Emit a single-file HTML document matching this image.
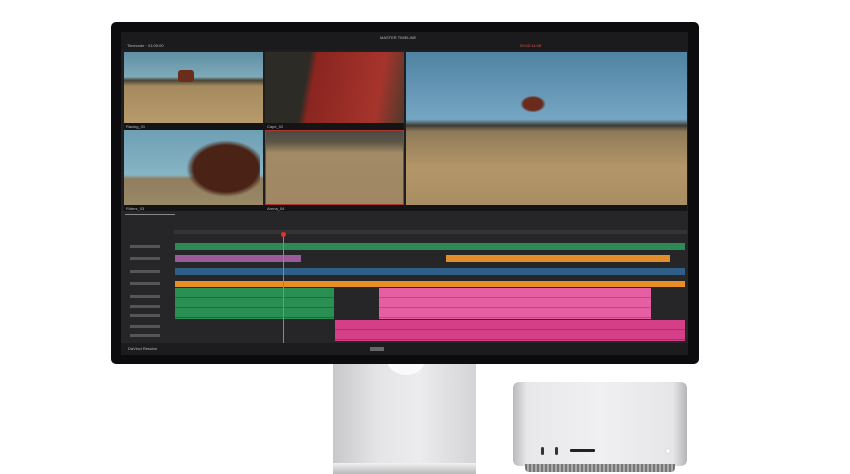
<!DOCTYPE html><html><head><style>
body{margin:0;width:850px;height:474px;background:#fff;position:relative;overflow:hidden;font-family:"Liberation Sans",sans-serif}
div{position:absolute;box-sizing:border-box}
.t{font-size:4px;color:#bbb;white-space:nowrap}
.h{width:30px;height:3px;background:#555;left:130px}
</style></head><body>
<!-- stand -->
<div style="left:333px;top:360px;width:143px;height:114px;background:linear-gradient(90deg,#c8c8ca,#e4e4e6 30%,#ececee 60%,#d4d4d6);"></div>
<div style="left:333px;top:463px;width:143px;height:11px;background:linear-gradient(#f2f2f2,#b8b8ba)"></div>
<div style="left:387px;top:345px;width:38px;height:30px;border-radius:50%;background:#fafafa"></div>
<!-- mac studio -->
<div style="left:513px;top:382px;width:174px;height:84px;border-radius:6px;background:linear-gradient(90deg,#b9b9bc,#e8e8ea 8%,#f0f0f2 50%,#e6e6e8 92%,#b5b5b8)"></div>
<div style="left:525px;top:464px;width:150px;height:8px;background:repeating-linear-gradient(90deg,#777 0 2px,#aaa 2px 4px);border-radius:0 0 4px 4px"></div>
<div style="left:541px;top:447px;width:3px;height:8px;background:#333;border-radius:2px"></div>
<div style="left:555px;top:447px;width:3px;height:8px;background:#333;border-radius:2px"></div>
<div style="left:570px;top:449px;width:25px;height:3px;background:#222;border-radius:1px"></div>
<div style="left:666px;top:449px;width:4px;height:4px;background:#fff;border-radius:50%;box-shadow:0 0 1px #999"></div>
<!-- monitor -->
<div style="left:111px;top:22px;width:588px;height:342px;background:#0c0c0e;border-radius:5px"></div>
<div style="left:121px;top:32px;width:567px;height:323px;background:#1f1f22"></div>
<div style="left:121px;top:32px;width:567px;height:18px;background:#1b1b1d"></div>
<div class="t" style="left:380px;top:35px">MASTER TIMELINE</div>
<div class="t" style="left:127px;top:43px">Timecode · 01:00:00</div>
<div class="t" style="left:520px;top:43px;color:#d55">00:02:14:08</div>
<!-- viewers -->
<div style="left:124px;top:52px;width:139px;height:71px;background:linear-gradient(#5f8fa3 0,#7eaab8 35%,#4a4536 40%,#a48a5e 48%,#b89b6c 100%)"></div>
<div style="left:178px;top:70px;width:16px;height:12px;background:#6b2c1c;border-radius:3px"></div>
<div style="left:265px;top:52px;width:139px;height:71px;background:linear-gradient(100deg,#2d2b25 0 30%,#8a2520 35%,#a6342c 80%,#4e3a2c)"></div>
<div style="left:124px;top:130px;width:139px;height:75px;background:linear-gradient(#6e9fb3 0,#86b5c4 60%,#8f7d5f 65%,#9a8966)"></div>
<div style="left:175px;top:132px;width:85px;height:73px;background:radial-gradient(ellipse at 60% 50%,#4a2216 0 45%,transparent 55%)"></div>
<div style="left:265px;top:130px;width:139px;height:75px;border:1px solid #b03530;background:linear-gradient(#4a4a45 0,#5c5446 15%,#a38a66 30%,#9f8763)"></div>
<div style="left:406px;top:52px;width:281px;height:153px;background:linear-gradient(#4f83a2 0,#75a6c2 44%,#3d3a34 48%,#8e7a58 52%,#b39668 75%,#a98e63)"></div>
<div style="left:518px;top:94px;width:30px;height:20px;background:radial-gradient(ellipse,#6a2a1c 0 45%,transparent 60%)"></div>
<div style="left:124px;top:123px;width:280px;height:7px;background:#141414"></div>
<div class="t" style="left:126px;top:124px">Racing_01</div>
<div class="t" style="left:267px;top:124px">Cape_02</div>
<div style="left:124px;top:205px;width:563px;height:6px;background:#141414"></div>
<div class="t" style="left:126px;top:206px">Riders_03</div>
<div class="t" style="left:267px;top:206px">Arena_04</div>
<!-- timeline -->
<div style="left:121px;top:211px;width:567px;height:144px;background:#262629"></div>
<div style="left:125px;top:214px;width:50px;height:1px;background:#888"></div>
<div class="h" style="top:245px"></div><div class="h" style="top:257px"></div><div class="h" style="top:270px"></div><div class="h" style="top:282px"></div>
<div class="h" style="top:295px"></div><div class="h" style="top:305px"></div><div class="h" style="top:314px"></div><div class="h" style="top:325px"></div><div class="h" style="top:334px"></div>
<div style="left:174px;top:230px;width:513px;height:4px;background:#333"></div>
<div style="left:175px;top:243px;width:510px;height:7px;background:#2e8a55"></div>
<div style="left:175px;top:255px;width:126px;height:7px;background:#9a5b9a"></div>
<div style="left:446px;top:255px;width:224px;height:7px;background:#e38e2a"></div>
<div style="left:175px;top:268px;width:510px;height:7px;background:#2f5f86"></div>
<div style="left:175px;top:281px;width:510px;height:6px;background:#e98e22"></div>
<div style="left:175px;top:288px;width:159px;height:31px;background:repeating-linear-gradient(#2a8f52 0 9px,#1e6d3e 9px 10px)"></div>
<div style="left:379px;top:288px;width:272px;height:31px;background:repeating-linear-gradient(#e55fa2 0 9px,#c14586 9px 10px)"></div>
<div style="left:335px;top:320px;width:350px;height:21px;background:repeating-linear-gradient(#d53f88 0 9px,#a93070 9px 10px)"></div>
<div style="left:283px;top:234px;width:1px;height:110px;background:#888"></div>
<div style="left:281px;top:232px;width:5px;height:5px;background:#d33;border-radius:50%"></div>
<div style="left:121px;top:343px;width:567px;height:12px;background:#1c1c1e"></div>
<div class="t" style="left:128px;top:346px">DaVinci Resolve</div>
<div style="left:370px;top:347px;width:14px;height:4px;background:#666"></div>
</body></html>
